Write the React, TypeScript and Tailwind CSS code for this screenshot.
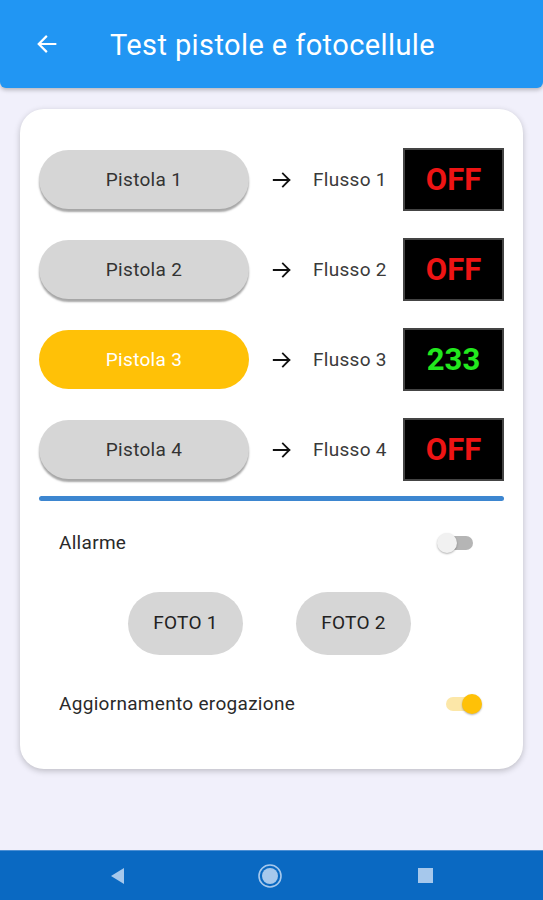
import React, { useState } from 'react';

interface Pistola {
    id: number;
    active: boolean;
    value: string;
}

const PISTOLE: Pistola[] = [
    { id: 1, active: false, value: 'OFF' },
    { id: 2, active: false, value: 'OFF' },
    { id: 3, active: true, value: '233' },
    { id: 4, active: false, value: 'OFF' },
];

const Toggle = ({ on }: { on: boolean }) => (
    <div className="relative w-[38px] h-[20px] flex items-center">
        <div className={`w-[34px] h-[14px] ml-[2px] rounded-full ${on ? 'bg-[#FCE7A8]' : 'bg-[#B5B5B5]'}`} />
        <div
            className={`absolute top-0 w-[20px] h-[20px] rounded-full shadow-[0_1px_2px_rgba(0,0,0,0.3)] ${
                on ? 'right-0 bg-[#FFC107]' : 'left-0 bg-[#F1F1F1]'
            }`}
        />
    </div>
);

const ArrowRight = () => (
    <svg width="22" height="22" viewBox="0 0 24 24" fill="none" stroke="#111" strokeWidth="2" strokeLinecap="square">
        <path d="M3 12h17M13 5l7 7-7 7" />
    </svg>
);

export default function App() {
    const [allarme] = useState(false);
    const [aggiornamento] = useState(true);

    return (
        <div className="w-[543px] h-[900px] flex flex-col bg-[#F1F0FB] font-['Roboto',sans-serif] overflow-hidden">
            {/* Header */}
            <div className="h-[88px] bg-[#2196F3] rounded-b-[6px] shadow-[0_2px_4px_rgba(0,0,0,0.25)] flex items-center px-[36px] shrink-0 relative z-10">
                <svg width="22" height="22" viewBox="0 0 24 24" fill="none" stroke="white" strokeWidth="2.4" strokeLinecap="square">
                    <path d="M21 12H4M11 4l-8 8 8 8" />
                </svg>
                <h1 className="ml-[52px] mt-[2px] text-white text-[29px] tracking-[0.4px] leading-none">Test pistole e fotocellule</h1>
            </div>

            {/* Card */}
            <div className="mx-[20px] mt-[21px] h-[660px] bg-white rounded-[24px] shadow-[0_2px_6px_rgba(0,0,0,0.22)] px-[19px] pt-[38px] text-[19px] tracking-[0.3px]">
                <div className="flex flex-col gap-[26px]">
                    {PISTOLE.map(p => (
                        <div key={p.id} className="flex items-center h-[64px]">
                            <button
                                className={`w-[210px] h-[59px] pt-[3px] rounded-full ${
                                    p.active
                                        ? 'bg-[#FFC107] text-white'
                                        : 'bg-[#D6D6D6] text-[#333] shadow-[0_3px_2px_rgba(0,0,0,0.35)]'
                                }`}
                            >
                                Pistola {p.id}
                            </button>
                            <div className="ml-[22px] mt-[2px]">
                                <ArrowRight />
                            </div>
                            <span className="ml-[20px] mt-[2px] text-[#3a3a3a]">Flusso {p.id}</span>
                            <div className="ml-auto w-[101px] h-[63px] bg-black border-2 border-[#444] flex items-center justify-center">
                                <span
                                    className={`text-[31px] font-bold leading-none tracking-normal ${
                                        p.active ? 'text-[#22E81E]' : 'text-[#EE1414]'
                                    }`}
                                >
                                    {p.value}
                                </span>
                            </div>
                        </div>
                    ))}
                </div>

                <div className="mt-[15px] h-[5px] rounded-full bg-[#3D86D0]" />

                <div className="mt-[28px] flex items-center justify-between pl-[20px] pr-[29px]">
                    <span className="text-[#2a2a2a]">Allarme</span>
                    <Toggle on={allarme} />
                </div>

                <div className="mt-[34px] flex justify-center gap-[53px] pr-[4px]">
                    <button className="w-[115px] h-[63px] rounded-full bg-[#D6D6D6] text-[#222]">FOTO 1</button>
                    <button className="w-[115px] h-[63px] rounded-full bg-[#D6D6D6] text-[#222]">FOTO 2</button>
                </div>

                <div className="mt-[35px] flex items-center justify-between pl-[20px] pr-[22px]">
                    <span className="text-[#2a2a2a]">Aggiornamento erogazione</span>
                    <Toggle on={aggiornamento} />
                </div>
            </div>

            <div className="flex-1" />

            {/* System navigation bar */}
            <div className="h-[50px] bg-[#0A69C2] flex items-center shrink-0 border-t border-[#4C8FD4]">
                <div className="w-[270px] flex justify-center">
                    <svg width="18" height="20" viewBox="0 0 18 20" className="ml-[-36px]">
                        <path d="M16 2 L3 10 L16 18 Z" fill="#A6C8EC" />
                    </svg>
                </div>
                <svg width="26" height="26" viewBox="0 0 26 26" className="ml-[-13px]">
                    <circle cx="13" cy="13" r="11" fill="none" stroke="#A6C8EC" strokeWidth="1.6" />
                    <circle cx="13" cy="13" r="8" fill="#A6C8EC" />
                </svg>
                <div className="ml-[135px] w-[15px] h-[15px] bg-[#A6C8EC]" />
            </div>
        </div>
    );
}
